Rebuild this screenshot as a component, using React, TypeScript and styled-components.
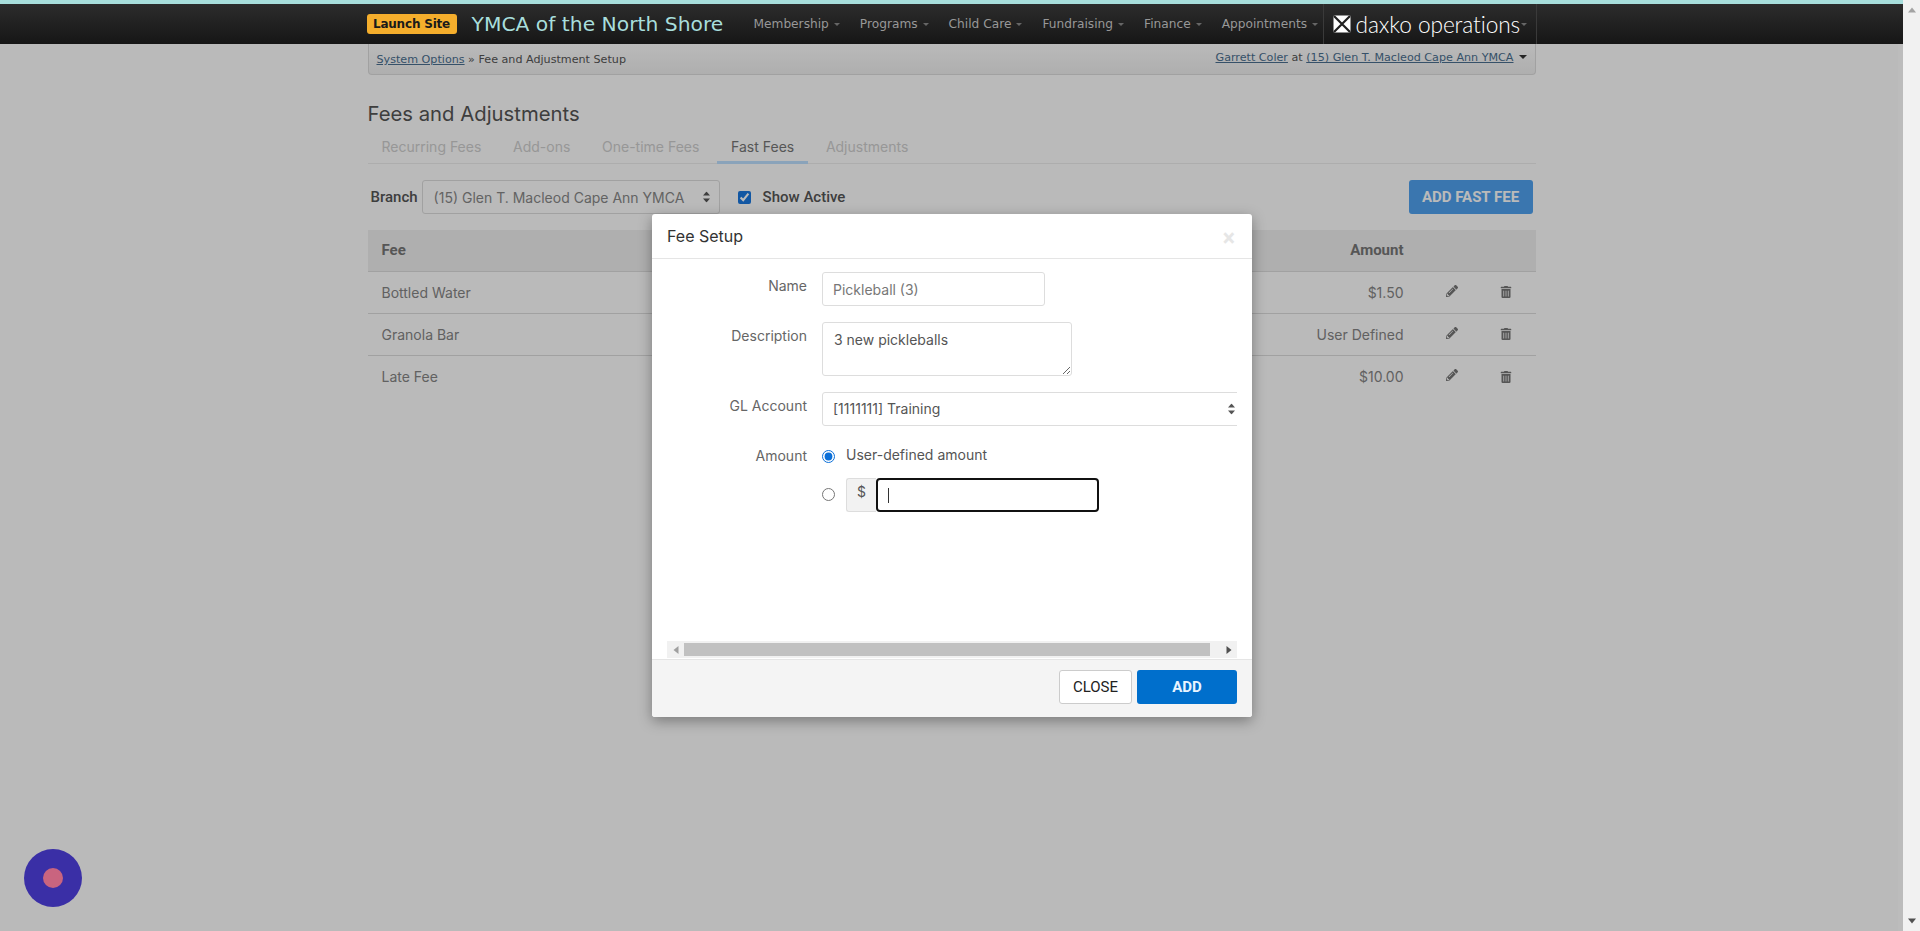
import styled, { createGlobalStyle } from 'styled-components'
import { FaPencilAlt, FaTrashAlt } from 'react-icons/fa'

const GlobalStyle = createGlobalStyle`
  html, body {
    margin: 0;
    height: 100%;
    overflow: hidden;
    background: #fff;
  }
  * {
    box-sizing: border-box;
  }
`

const Shell = styled.div`
  display: flex;
  height: 931px;
  font-family: Inter, "Liberation Sans", sans-serif;
  font-size: 14px;
  color: #444;
`

const Main = styled.div`
  position: relative;
  flex: 1;
  min-width: 0;
  overflow: hidden;
  background: #fff;
`

const PageScrollbar = styled.div`
  width: 17px;
  display: flex;
  flex-direction: column;
  justify-content: space-between;
  align-items: center;
  padding: 6px 0;
  background: #f1f1f1;
`

const TopBar = styled.header`
  position: relative;
  z-index: 3;
  height: 44px;
  border-top: 4px solid #a8dedc;
  background: linear-gradient(#2c2c2c, #161616);
`

const TopBarInner = styled.div`
  width: 1170px;
  height: 40px;
  margin: 0 auto;
  display: flex;
  align-items: center;
`

const LaunchBadge = styled.a`
  width: 90px;
  height: 20px;
  border-radius: 3px;
  background: #f5ae2c;
  color: #1a1a1a;
  font-family: "DejaVu Sans", sans-serif;
  font-size: 12px;
  font-weight: 700;
  line-height: 20px;
  text-align: center;
  letter-spacing: -0.2px;
`

const SiteName = styled.span`
  margin-left: 15px;
  width: 282px;
  color: #a8dedc;
  font-family: "DejaVu Sans", sans-serif;
  font-size: 20.3px;
  white-space: nowrap;
`

const Nav = styled.nav`
  display: flex;
  align-items: center;
  gap: 20px;
  width: 569px;
`

const NavItem = styled.span`
  display: flex;
  align-items: center;
  gap: 5px;
  color: #989898;
  font-family: "DejaVu Sans", sans-serif;
  font-size: 12.2px;
  white-space: nowrap;
`

const Caret = styled.i<{ $color?: string; $size?: number }>`
  display: inline-block;
  width: 0;
  height: 0;
  border-left: ${({ $size }) => $size ?? 3}px solid transparent;
  border-right: ${({ $size }) => $size ?? 3}px solid transparent;
  border-top: ${({ $size }) => $size ?? 3}px solid ${({ $color }) => $color ?? '#666'};
`

const Brand = styled.div`
  height: 40px;
  width: 214px;
  display: flex;
  align-items: center;
  gap: 1px;
  padding-left: 9px;
  border-left: 1px solid #3a3a3a;
  border-right: 1px solid #3a3a3a;
`

const BrandText = styled.span`
  margin-left: 4px;
  color: #fff;
  font-family: Lato, sans-serif;
  font-size: 22.7px;
  font-weight: 300;
  letter-spacing: -0.1px;
  white-space: nowrap;
`

const Container = styled.div`
  width: 1168px;
  margin: 0 auto;
`

const Breadcrumbs = styled.div`
  height: 31px;
  display: flex;
  justify-content: space-between;
  padding: 0 8px;
  border: 1px solid #ddd;
  border-top: none;
  border-radius: 0 0 4px 4px;
  background: linear-gradient(#fff, #f0f0f0);
  font-family: "DejaVu Sans", sans-serif;
  font-size: 11.15px;
  color: #555;
`

const CrumbTrail = styled.div`
  padding-top: 9px;
`

const CrumbUser = styled.div`
  display: flex;
  align-items: flex-start;
  gap: 5px;
  padding-top: 7px;
`

const CrumbLink = styled.a`
  color: #4a6f90;
  text-decoration: underline;
`

const CrumbArrow = styled.span`
  display: flex;
  margin-top: 4px;
`

const Title = styled.h1`
  margin: 26px 0 0;
  font-size: 20.3px;
  font-weight: 400;
  line-height: 26px;
  color: #555;
`

const Tabs = styled.div`
  display: flex;
  gap: 3.7px;
  height: 34px;
  margin-top: 3px;
  border-bottom: 1px solid #eee;
`

const Tab = styled.a<{ $active?: boolean }>`
  height: 34px;
  padding: 7px 14px 0;
  line-height: 20px;
  color: ${({ $active }) => ($active ? '#777' : '#cfcfcf')};
  border-bottom: 3px solid ${({ $active }) => ($active ? '#bde0ff' : 'transparent')};
`

const FilterRow = styled.div`
  display: flex;
  align-items: center;
  height: 34px;
  margin-top: 16px;
  padding: 0 3px;
`

const RobotoLabel = styled.label`
  font-family: Roboto, sans-serif;
  font-size: 15px;
  font-weight: 500;
  color: #555;
`

const BranchSelect = styled.div`
  position: relative;
  width: 298px;
  height: 34px;
  margin-left: 4px;
  padding: 0 11px;
  display: flex;
  align-items: center;
  border: 1px solid #ddd;
  border-radius: 3px;
  color: #888;
  white-space: nowrap;
`

const Chevrons = styled.span`
  position: absolute;
  top: 50%;
  right: 9px;
  display: flex;
  transform: translateY(-50%);
`

const ShowActive = styled(RobotoLabel)`
  display: flex;
  align-items: center;
  gap: 12px;
  margin-left: 18px;
`

const CheckBox = styled.input`
  width: 13px;
  height: 13px;
  margin: 0;
  accent-color: #1a78e0;
`

const AddFeeButton = styled.button`
  width: 124px;
  height: 34px;
  margin-left: auto;
  border: none;
  border-radius: 3px;
  background: #50a2f0;
  color: #fff;
  font-family: Roboto, sans-serif;
  font-size: 15px;
  font-weight: 700;
`

const FeeTable = styled.div`
  margin-top: 15.5px;
`

const FeeRow = styled.div<{ $head?: boolean; $last?: boolean }>`
  display: grid;
  grid-template-columns: 1fr auto 48px 60px;
  align-items: center;
  height: 42px;
  padding-left: 14px;
  background: ${({ $head }) => ($head ? '#f0f0f0' : 'transparent')};
  border-bottom: ${({ $last }) => ($last ? 'none' : '1px solid #ddd')};
  font-family: ${({ $head }) => ($head ? 'Roboto, sans-serif' : 'inherit')};
  font-size: ${({ $head }) => ($head ? '15px' : '14px')};
  font-weight: ${({ $head }) => ($head ? 700 : 400)};
  color: ${({ $head }) => ($head ? '#777' : '#868686')};
`

const FeeAmount = styled.span`
  padding-right: 24px;
  text-align: right;
`

const FeeIcon = styled.span<{ $lift?: number }>`
  display: flex;
  justify-content: center;
  margin-bottom: ${({ $lift }) => $lift ?? 0}px;
  color: #777;
  font-size: 12px;
`

const Backdrop = styled.div`
  position: absolute;
  inset: 0;
  z-index: 2;
  display: flex;
  justify-content: center;
  padding: 214px 0 0 1px;
  background: rgba(0, 0, 0, 0.27);

  &::after {
    content: '';
    position: absolute;
    top: 44px;
    right: 0;
    bottom: 0;
    width: 5px;
    background: rgba(255, 255, 255, 0.04);
  }
`

const Modal = styled.div`
  width: 600px;
  height: 503px;
  display: flex;
  flex-direction: column;
  border-radius: 3px;
  background: #fff;
  box-shadow: 0 4px 14px rgba(0, 0, 0, 0.35);
`

const ModalHeader = styled.div`
  height: 45px;
  display: flex;
  align-items: center;
  justify-content: space-between;
  padding: 0 15px;
  border-bottom: 1px solid #e5e5e5;
`

const ModalTitle = styled.h2`
  margin: 0;
  font-size: 16px;
  font-weight: 400;
  color: #333;
`

const CloseMark = styled.span`
  margin: 5px 2px 0 0;
  font-family: Roboto, sans-serif;
  font-size: 23px;
  font-weight: 700;
  line-height: 20px;
  color: #e6e6e6;
`

const ModalBody = styled.div`
  flex: 1;
  min-height: 0;
  display: flex;
  flex-direction: column;
  padding: 13px 15px 1px;
`

const FormArea = styled.div`
  flex: 1;
  min-height: 0;
  overflow: hidden;
`

const FormRow = styled.div`
  display: grid;
  grid-template-columns: 140px 1fr;
  column-gap: 15px;
  margin-bottom: 16px;
`

const FieldLabel = styled.label`
  padding-top: 4px;
  line-height: 20px;
  text-align: right;
  color: #666;
`

const TextInput = styled.input`
  display: block;
  width: 223px;
  height: 34px;
  padding: 0 8px 0 10px;
  border: 1px solid #ddd;
  border-radius: 3px;
  font: inherit;
  color: #777;
  outline: none;
`

const TextArea = styled.textarea`
  display: block;
  width: 250px;
  height: 54px;
  padding: 7px 11px;
  border: 1px solid #ddd;
  border-radius: 3px;
  font: inherit;
  line-height: 20px;
  color: #555;
  outline: none;
`

const GlSelect = styled(BranchSelect)`
  width: 420px;
  margin-left: 0;
  padding: 0 11px 2px 10px;
  color: #555;
  border-radius: 3px 0 0 3px;
`

const GlChevrons = styled(Chevrons)`
  right: 6px;
`

const AmountColumn = styled.div`
  display: flex;
  flex-direction: column;
  gap: 12px;
  padding-top: 4px;
`

const RadioRow = styled.div`
  display: flex;
  align-items: center;
  height: 20px;
  gap: 11px;
`

const RadioInput = styled.input`
  width: 13px;
  height: 13px;
  margin: 1px 0 0;
  accent-color: #0b6fd8;
`

const MoneyRadio = styled(RadioInput)`
  margin: 0 0 2px;
`

const RadioText = styled.label`
  margin-bottom: 2px;
  line-height: 20px;
  color: #555;
`

const MoneyRow = styled.div`
  display: flex;
  align-items: center;
  height: 34px;
  gap: 11px;
`

const MoneyGroup = styled.div`
  display: flex;
`

const Addon = styled.span`
  width: 30px;
  height: 34px;
  padding-top: 3px;
  border: 1px solid #ddd;
  border-right: none;
  border-radius: 3px 0 0 3px;
  background: #f2f2f2;
  line-height: 20px;
  text-align: center;
  color: #555;
`

const FocusField = styled.div`
  width: 223px;
  height: 34px;
  display: flex;
  align-items: center;
  padding-left: 10px;
  border: 2px solid #111;
  border-radius: 4px;
`

const TextCaret = styled.span`
  width: 1px;
  height: 15px;
  background: #333;
`

const BlankInput = styled.input`
  flex: 1;
  min-width: 0;
  border: none;
  outline: none;
  padding: 0;
  background: transparent;
`

const HScrollbar = styled.div`
  height: 17px;
  display: flex;
  align-items: center;
  background: #f1f1f1;
`

const ScrollEnd = styled.span`
  width: 17px;
  display: flex;
  justify-content: center;
`

const ScrollThumb = styled.div`
  width: 526px;
  height: 13px;
  background: #c1c1c1;
`

const ScrollGap = styled.div`
  flex: 1;
`

const ModalFooter = styled.div`
  height: 58px;
  display: flex;
  justify-content: flex-end;
  gap: 5px;
  padding: 10px 15px 0;
  border-top: 1px solid #e5e5e5;
  border-radius: 0 0 3px 3px;
  background: #f4f4f4;
`

const FooterButton = styled.button<{ $primary?: boolean }>`
  width: ${({ $primary }) => ($primary ? '100px' : '73px')};
  height: 34px;
  border: ${({ $primary }) => ($primary ? 'none' : '1px solid #ccc')};
  border-radius: 3px;
  background: ${({ $primary }) => ($primary ? '#006fcc' : '#fff')};
  color: ${({ $primary }) => ($primary ? '#e8f4ff' : '#222')};
  font-family: Roboto, sans-serif;
  font-size: 15px;
  font-weight: ${({ $primary }) => ($primary ? 700 : 400)};
`

const ChatLauncher = styled.div`
  position: absolute;
  left: 24px;
  bottom: 24px;
  z-index: 4;
  width: 58px;
  height: 58px;
  display: flex;
  align-items: center;
  justify-content: center;
  border-radius: 50%;
  background: #3a2fa6;
`

const ChatDot = styled.span`
  width: 20px;
  height: 20px;
  border-radius: 50%;
  background: #c9647f;
`

const navItems = ['Membership', 'Programs', 'Child Care', 'Fundraising', 'Finance', 'Appointments']
const tabs = ['Recurring Fees', 'Add-ons', 'One-time Fees', 'Fast Fees', 'Adjustments']
const fees = [
  { name: 'Bottled Water', amount: '$1.50' },
  { name: 'Granola Bar', amount: 'User Defined' },
  { name: 'Late Fee', amount: '$10.00' },
]

const SelectArrows = () => (
  <svg viewBox="0 0 7 11" width="7" height="11">
    <path d="M3.5 0 7 4H0zM3.5 11 0 7h7z" fill="#555" />
  </svg>
)

const Triangle = ({ dir, color = '#505050' }: { dir: 'up' | 'down' | 'left' | 'right'; color?: string }) => {
  const d = {
    up: 'M4 1.5 8 6.5H0z',
    down: 'M4 6.5 0 1.5h8z',
    left: 'M1.5 4 6.5 0v8z',
    right: 'M6.5 4 1.5 8V0z',
  }[dir]
  return (
    <svg viewBox="0 0 8 8" width="8" height="8">
      <path d={d} fill={color} />
    </svg>
  )
}

const DaxkoMark = () => (
  <svg viewBox="0 0 18 18" width="18" height="18">
    <rect width="17" height="17" x="0.5" y="0.5" rx="1" fill="#fff" />
    <path d="M1 1 17 17M17 1 1 17" stroke="#1f1f1f" strokeWidth="2.2" />
  </svg>
)

export default function App() {
  return (
    <Shell>
      <GlobalStyle />
      <Main>
        <TopBar>
          <TopBarInner>
            <LaunchBadge>Launch Site</LaunchBadge>
            <SiteName>YMCA of the North Shore</SiteName>
            <Nav>
              {navItems.map((item) => (
                <NavItem key={item}>
                  {item}
                  <Caret />
                </NavItem>
              ))}
            </Nav>
            <Brand>
              <DaxkoMark />
              <BrandText>daxko operations</BrandText>
              <Caret />
            </Brand>
          </TopBarInner>
        </TopBar>

        <Container>
          <Breadcrumbs>
            <CrumbTrail>
              <CrumbLink>System Options</CrumbLink> » Fee and Adjustment Setup
            </CrumbTrail>
            <CrumbUser>
              <span>
                <CrumbLink>Garrett Coler</CrumbLink> at <CrumbLink>(15) Glen T. Macleod Cape Ann YMCA</CrumbLink>
              </span>
              <CrumbArrow>
                <Caret $color="#333" $size={4} />
              </CrumbArrow>
            </CrumbUser>
          </Breadcrumbs>

          <Title>Fees and Adjustments</Title>
          <Tabs>
            {tabs.map((tab) => (
              <Tab key={tab} $active={tab === 'Fast Fees'}>
                {tab}
              </Tab>
            ))}
          </Tabs>

          <FilterRow>
            <RobotoLabel>Branch</RobotoLabel>
            <BranchSelect>
              (15) Glen T. Macleod Cape Ann YMCA
              <Chevrons>
                <SelectArrows />
              </Chevrons>
            </BranchSelect>
            <ShowActive>
              <CheckBox type="checkbox" defaultChecked />
              Show Active
            </ShowActive>
            <AddFeeButton>ADD FAST FEE</AddFeeButton>
          </FilterRow>

          <FeeTable>
            <FeeRow $head>
              <span>Fee</span>
              <FeeAmount>Amount</FeeAmount>
              <span />
              <span />
            </FeeRow>
            {fees.map((fee, i) => (
              <FeeRow key={fee.name} $last={i === fees.length - 1}>
                <span>{fee.name}</span>
                <FeeAmount>{fee.amount}</FeeAmount>
                <FeeIcon $lift={3}>
                  <FaPencilAlt />
                </FeeIcon>
                <FeeIcon>
                  <FaTrashAlt />
                </FeeIcon>
              </FeeRow>
            ))}
          </FeeTable>
        </Container>

        <Backdrop>
          <Modal>
            <ModalHeader>
              <ModalTitle>Fee Setup</ModalTitle>
              <CloseMark>×</CloseMark>
            </ModalHeader>
            <ModalBody>
              <FormArea>
                <FormRow>
                  <FieldLabel>Name</FieldLabel>
                  <TextInput defaultValue="Pickleball (3)" />
                </FormRow>
                <FormRow>
                  <FieldLabel>Description</FieldLabel>
                  <TextArea defaultValue="3 new pickleballs" />
                </FormRow>
                <FormRow>
                  <FieldLabel>GL Account</FieldLabel>
                  <GlSelect>
                    [1111111] Training
                    <GlChevrons>
                      <SelectArrows />
                    </GlChevrons>
                  </GlSelect>
                </FormRow>
                <FormRow>
                  <FieldLabel>Amount</FieldLabel>
                  <AmountColumn>
                    <RadioRow>
                      <RadioInput type="radio" name="amount" defaultChecked />
                      <RadioText>User-defined amount</RadioText>
                    </RadioRow>
                    <MoneyRow>
                      <MoneyRadio type="radio" name="amount" />
                      <MoneyGroup>
                        <Addon>$</Addon>
                        <FocusField>
                          <TextCaret />
                          <BlankInput />
                        </FocusField>
                      </MoneyGroup>
                    </MoneyRow>
                  </AmountColumn>
                </FormRow>
              </FormArea>
              <HScrollbar>
                <ScrollEnd>
                  <Triangle dir="left" color="#a0a0a0" />
                </ScrollEnd>
                <ScrollThumb />
                <ScrollGap />
                <ScrollEnd>
                  <Triangle dir="right" />
                </ScrollEnd>
              </HScrollbar>
            </ModalBody>
            <ModalFooter>
              <FooterButton>CLOSE</FooterButton>
              <FooterButton $primary>ADD</FooterButton>
            </ModalFooter>
          </Modal>
        </Backdrop>

        <ChatLauncher>
          <ChatDot />
        </ChatLauncher>
      </Main>
      <PageScrollbar>
        <Triangle dir="up" color="#a3a3a3" />
        <Triangle dir="down" />
      </PageScrollbar>
    </Shell>
  )
}
